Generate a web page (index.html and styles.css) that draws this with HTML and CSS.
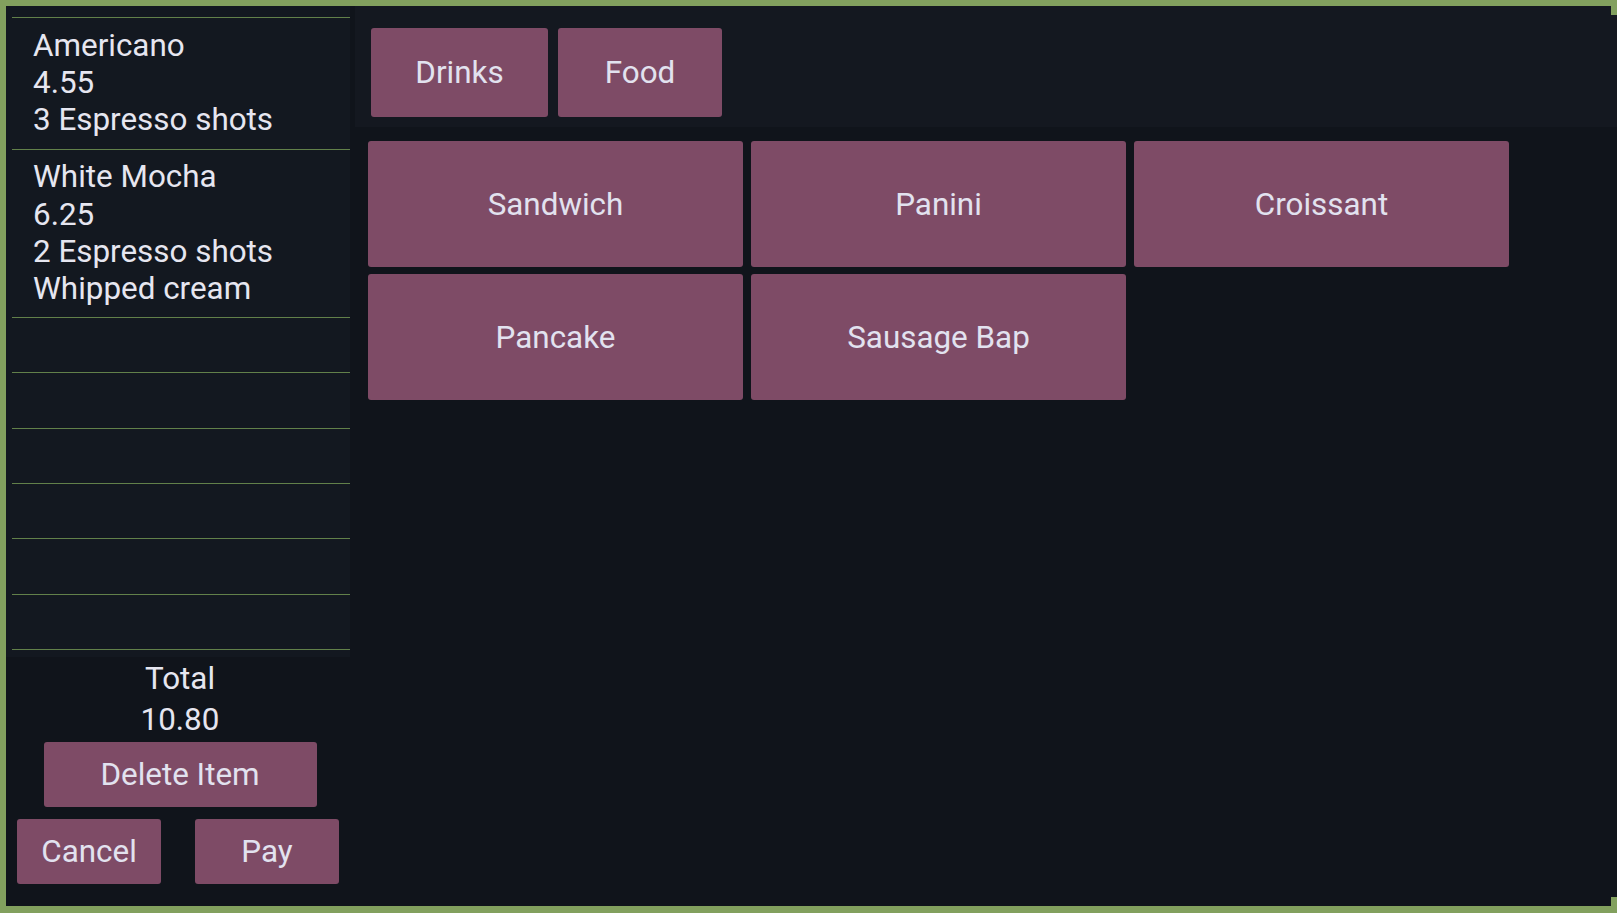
FILE: index.html
```html
<!DOCTYPE html>
<html lang="en">
<head>
<meta charset="utf-8">
<title>POS</title>
<link rel="stylesheet" href="styles.css">
</head>
<body>
<div class="app">
  <aside class="order">
    <div class="order-list">
      <div class="order-row first">
        <div>Americano</div>
        <div>4.55</div>
        <div>3 Espresso shots</div>
      </div>
      <div class="order-row">
        <div>White Mocha</div>
        <div>6.25</div>
        <div>2 Espresso shots</div>
        <div>Whipped cream</div>
      </div>
      <div class="order-row">&nbsp;</div>
      <div class="order-row">&nbsp;</div>
      <div class="order-row">&nbsp;</div>
      <div class="order-row">&nbsp;</div>
      <div class="order-row">&nbsp;</div>
      <div class="order-row last">&nbsp;</div>
    </div>
    <div class="order-footer">
      <div class="order-summary">
        <div class="total-label">Total</div>
        <div class="total-value">10.80</div>
        <button class="btn btn-delete">Delete Item</button>
      </div>
      <div class="order-actions">
        <button class="btn btn-action">Cancel</button>
        <button class="btn btn-action">Pay</button>
      </div>
    </div>
  </aside>
  <main class="menu">
    <nav class="tabs">
      <button class="btn tab tab-drinks">Drinks</button>
      <button class="btn tab tab-food">Food</button>
    </nav>
    <section class="items">
      <button class="btn item">Sandwich</button>
      <button class="btn item">Panini</button>
      <button class="btn item">Croissant</button>
      <button class="btn item">Pancake</button>
      <button class="btn item">Sausage Bap</button>
    </section>
  </main>
</div>
</body>
</html>
```

FILE: styles.css
```css
html, body {
  margin: 0;
  padding: 0;
}
body {
  background: #82a05e;
  padding: 6px 0 7px 6px;
  overflow: hidden;
  font-family: Roboto, "Liberation Sans", sans-serif;
  font-size: 31.4px;
  color: #e6e6f0;
}
.app {
  position: relative;
  display: flex;
  gap: 5px;
  width: 1611px;
  height: 900px;
  background: #10141b;
}
.app::before,
.app::after {
  content: "";
  position: absolute;
  right: 0;
  width: 6px;
  height: 9px;
  background: #82a05e;
}
.app::before { top: 0; }
.app::after { bottom: 0; }

.order {
  width: 344px;
  flex: none;
  display: flex;
  flex-direction: column;
}
.order-list {
  background: #131820;
  padding: 11px 0 7px 6px;
}
.order-row {
  border-top: 1px solid #62804a;
  padding: 8px 0 9px 21px;
  line-height: 37.4px;
}
.order-row.first {
  padding-top: 8.5px;
  padding-bottom: 10.5px;
}
.order-row.last {
  border-bottom: 1px solid #62804a;
}
.order-footer {
  display: flex;
  flex-direction: column;
}
.order-summary {
  display: flex;
  flex-direction: column;
  align-items: center;
  padding-left: 4px;
}
.total-label {
  margin-top: 3px;
  line-height: 37.5px;
}
.total-value {
  margin-top: 3px;
  line-height: 37.5px;
}
.btn {
  font-family: Roboto, "Liberation Sans", sans-serif;
  font-size: 31.4px;
  color: #e2e2ef;
  background: #7e4b66;
  border: none;
  border-radius: 3px;
  padding: 0;
  margin: 0;
  cursor: pointer;
}
.btn-delete {
  margin-top: 4px;
  width: 273px;
  height: 65px;
}
.order-actions {
  display: flex;
  justify-content: space-between;
  padding: 0 11px;
  margin-top: 12px;
}
.btn-action {
  width: 144px;
  height: 65px;
}

.menu {
  flex: 1;
  min-width: 0;
  display: flex;
  flex-direction: column;
}
.tabs {
  display: flex;
  gap: 10px;
  background: #141820;
  padding: 22px 16px 10px;
}
.tab {
  height: 89px;
}
.tab-drinks { width: 177px; }
.tab-food { width: 164px; }
.items {
  display: grid;
  grid-template-columns: repeat(3, 375px);
  grid-auto-rows: 126px;
  column-gap: 8px;
  row-gap: 7px;
  padding: 14px 13px;
}
.item {
  width: 100%;
  height: 100%;
}
```
